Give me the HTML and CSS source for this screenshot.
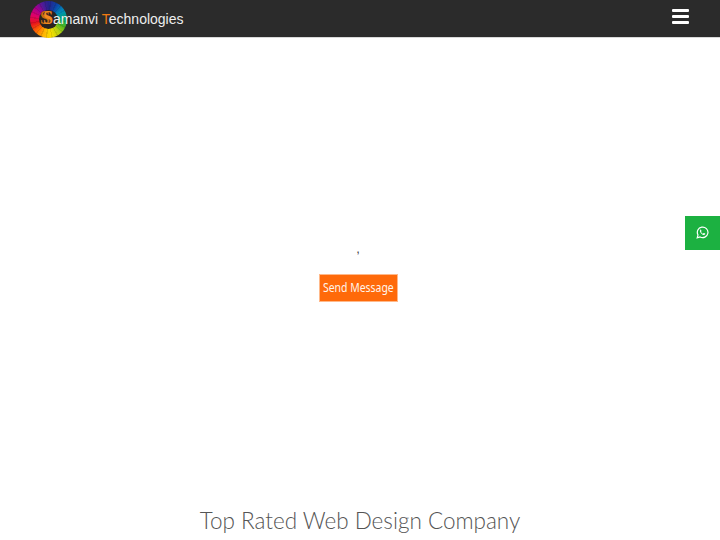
FILE: index.html
```html
<!DOCTYPE html>
<html lang="en">
<head>
<meta charset="utf-8">
<title>Samanvi Technologies</title>
<link rel="stylesheet" href="styles.css">
</head>
<body>
<header class="nav">
  <a class="brand" href="#">
    <span class="wheel"><span class="wheel-core"></span></span>
    <span class="brand-name"><span class="brand-s">S</span>amanvi <span class="accent">T</span>echnologies</span>
  </a>
  <button class="burger" aria-label="Menu"><span></span><span></span><span></span></button>
</header>
<main>
  <section class="contact">
    <p class="comma">,</p>
    <a class="send" href="#"><span class="send-label">Send Message</span></a>
  </section>
  <h1 class="title">Top Rated Web Design Company</h1>
</main>
<a class="whatsapp" href="#" aria-label="WhatsApp">
  <svg viewBox="0 0 24 24" width="13" height="13"><path fill="none" stroke="#fff" stroke-width="2.2" d="M2.2 21.8l1.5-5.3A9.8 9.8 0 1 1 7.5 20.3z"/><path fill="#fff" d="M8.6 6.9c-.9.6-1.7 1.800-1.300 3.400.7 2.700 3.700 5.600 6.300 6.300 1.600.4 2.800-.4 3.300-1.300.3-.6.2-1.200 0-1.400l-2.200-1.100c-.4-.1-.6.100-.9.500l-.6.700c-.2.200-.4.200-.7.100-1.300-.6-2.400-1.600-3.100-2.900-.1-.3-.1-.5.100-.7l.5-.6c.2-.2.300-.5.100-.8l-.9-2.100c-.2-.5-1.300-.4-1.600-.1z"/></svg>
</a>
</body>
</html>
```
FILE: styles.css
```css
* { box-sizing: border-box; }
html, body { margin: 0; height: 540px; overflow: hidden; background: #fff; }
body { font-family: "Liberation Sans", Arial, sans-serif; position: relative; }

.nav {
  height: 37px;
  background: #2b2b2b;
  box-shadow: 0 1px 0 #d8d8d8;
  display: flex;
  align-items: center;
  justify-content: space-between;
  padding: 0 31px 0 30px;
}
.brand { display: flex; align-items: center; text-decoration: none; height: 37px; }
.wheel {
  width: 37px; height: 37px; border-radius: 50%;
  margin-top: 1px;
  flex: none;
  display: flex; align-items: center; justify-content: center;
  background:
    repeating-conic-gradient(from 4deg, rgba(0,0,0,.1) 0 5deg, rgba(0,0,0,0) 5deg 18deg),
    conic-gradient(#26228c 0deg, #0c45a8 30deg, #0090b8 60deg, #00a868 90deg, #50b820 115deg, #b8d010 140deg, #f8e000 170deg, #ffb000 200deg, #ff6a00 225deg, #e8141c 255deg, #e00068 285deg, #a00090 315deg, #4a1c98 340deg, #26228c 360deg);
}
.wheel-core {
  width: 19px; height: 19px; border-radius: 50%;
  background: #2a2320;
  display: block;
}
.brand-name {
  margin-left: -24px;
  margin-top: 1px;
  font-size: 14px;
  color: #eee;
  position: relative;
  white-space: nowrap;
}
.brand-s {
  color: #f08a20;
  font-family: "Liberation Serif", serif;
  font-weight: bold;
  font-size: 18px;
  line-height: 14px;
  text-shadow: -3px 0 #c96a10;
}
.accent { color: #f07a12; }

.burger {
  width: 17px; padding: 0; border: 0; background: none;
  display: flex; flex-direction: column; gap: 3px;
  margin-top: -4px;
}
.burger span { display: block; height: 3px; background: #fff; border-radius: 1px; }

.contact {
  width: 716px;
  height: 447px;
  display: flex; flex-direction: column; align-items: center;
  padding-top: 199px;
}
.comma { margin: 0; height: 38px; font: 13px/26px "Liberation Sans", sans-serif; color: #444; }
.send {
  width: 79px; height: 28px;
  background: #ff6a0a;
  border: 1px solid #ffb98a;
  color: #fff5ea;
  font: 12.5px/26px "Noto Sans", sans-serif;
  text-align: center;
  text-decoration: none;
  white-space: nowrap;
  display: flex; justify-content: center;
}
.send-label { display: block; transform: scaleX(.835); flex: none; }
.title {
  margin: 24px 0 0;
  text-align: center;
  font: 300 22.5px/26px Lato, sans-serif;
  color: #555;
}
.whatsapp {
  position: absolute;
  right: 0; top: 216px;
  width: 35px; height: 34px;
  padding-bottom: 2px;
  background: #1cb141;
  display: flex; align-items: center; justify-content: center;
}
```
